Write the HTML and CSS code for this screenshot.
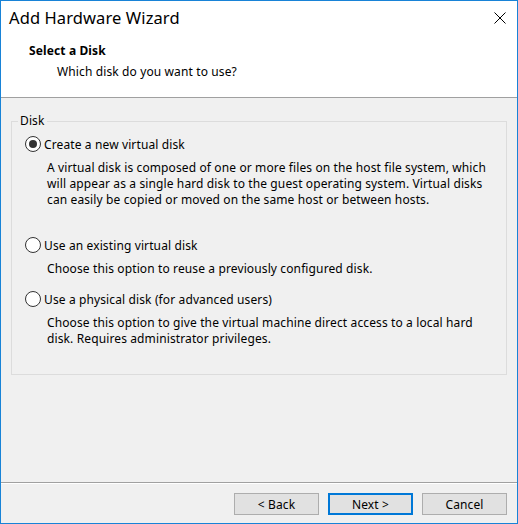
FILE: index.html
```html
<!DOCTYPE html>
<html lang="en">
<head>
    <meta charset="UTF-8">
    <title>Add Hardware Wizard</title>
    <link rel="stylesheet" href="styles.css">
</head>
<body>
    <div class="window">
        <div class="titlebar">
            <span class="title">Add Hardware Wizard</span>
            <svg class="close" width="12" height="12" viewBox="0 0 12 12">
                <path d="M0.5 0.5 L11.5 11.5 M11.5 0.5 L0.5 11.5" stroke="#000" stroke-width="1" fill="none"/>
            </svg>
        </div>
        <div class="header">
            <div class="heading">Select a Disk</div>
            <div class="subheading">Which disk do you want to use?</div>
        </div>

        <div class="content">
            <fieldset class="group">
                <legend>Disk</legend>

                <div class="option">
                    <span class="radio checked"></span>
                    <span class="label">Create a new virtual disk</span>
                </div>
                <p class="desc">A virtual disk is composed of one or more files on the host file system, which will appear as a single hard disk to the guest operating system. Virtual disks can easily be copied or moved on the same host or between hosts.</p>

                <div class="option spaced">
                    <span class="radio"></span>
                    <span class="label">Use an existing virtual disk</span>
                </div>
                <p class="desc">Choose this option to reuse a previously configured disk.</p>

                <div class="option">
                    <span class="radio"></span>
                    <span class="label">Use a physical disk (for advanced users)</span>
                </div>
                <p class="desc">Choose this option to give the virtual machine direct access to a local hard disk. Requires administrator privileges.</p>
            </fieldset>
        </div>

        <div class="footer">
            <button class="btn">&lt; Back</button>
            <button class="btn default">Next &gt;</button>
            <button class="btn cancel">Cancel</button>
        </div>
    </div>
</body>
</html>
```

FILE: styles.css
```css
* {
    box-sizing: border-box;
}

body {
    margin: 0;
    padding: 0;
    font-family: 'Noto Sans', 'Liberation Sans', sans-serif;
    font-size: 12px;
    letter-spacing: 0.12px;
    color: #000;
}

.window {
    width: 518px;
    height: 524px;
    border: 1px solid #1883d7;
    display: flex;
    flex-direction: column;
    background-color: #f0f0f0;
}

/* title bar + header share the white area */
.titlebar {
    background-color: #fff;
    height: 31px;
    display: flex;
    align-items: center;
    justify-content: space-between;
    padding: 2px 11px 0 8px;
}

.title {
    font-size: 16.5px;
    letter-spacing: 0.1px;
    color: #000;
}

.header {
    background-color: #fff;
    height: 66px;
    border-bottom: 1px solid #a0a0a0;
    padding-top: 11px;
}

.heading {
    font-weight: bold;
    padding-left: 28px;
    line-height: 16px;
}

.subheading {
    padding-left: 56px;
    margin-top: 5px;
    line-height: 16px;
}

.content {
    flex: 1;
    padding: 15px 10px 0 10px;
    border-bottom: 1px solid #a0a0a0;
}

.group {
    margin: 0;
    padding: 6px 0 14px 0;
    border: 1px solid #dcdcdc;
}

.group legend {
    padding: 0 2px;
    margin-left: 6px;
    line-height: 16px;
}

.option {
    display: flex;
    align-items: center;
    gap: 3px;
    margin-left: 13px;
    height: 18px;
}

/* collapses with the description's bottom margin */
.option.spaced {
    margin-top: 28px;
}

.radio {
    width: 16px;
    height: 16px;
    border: 1px solid #333;
    border-radius: 50%;
    background-color: #fff;
    display: flex;
    align-items: center;
    justify-content: center;
}

.radio.checked::after {
    content: "";
    width: 8px;
    height: 8px;
    border-radius: 50%;
    background-color: #333;
}

.desc {
    margin: 7px 0 13px 35px;
    line-height: 16px;
    width: 442px;
}

.footer {
    height: 40px;
    border-top: 1px solid #fff;
    display: flex;
    justify-content: flex-end;
    align-items: flex-start;
    gap: 9px;
    padding: 9px 10px 0 0;
}

.btn {
    width: 85px;
    height: 22px;
    background-color: #e1e1e1;
    border: 1px solid #adadad;
    font-family: inherit;
    font-size: 12px;
    letter-spacing: 0.12px;
    color: #000;
    padding: 0;
}

.btn.default {
    border: 2px solid #0078d7;
}
```
